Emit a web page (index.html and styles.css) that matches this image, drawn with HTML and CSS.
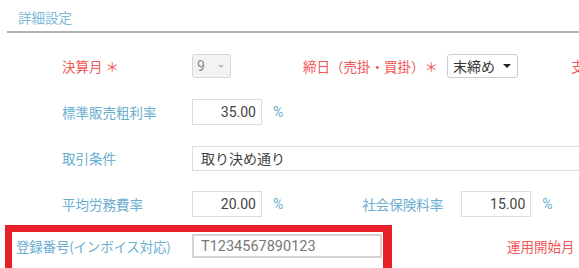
FILE: index.html
```html
<!doctype html>
<html>
<head>
    <meta charset="utf-8">
    <title>詳細設定</title>
    <link rel="stylesheet" href="styles.css">
</head>
<body>

<div class="section-head">詳細設定</div>

<div class="form">
    <div class="row">
        <div class="label required">決算月 ＊</div>
        <div class="select disabled select-month"><span>9</span><i class="caret"></i></div>
        <div class="label required label-close">締日（売掛・買掛）＊</div>
        <div class="select select-close"><span>末締め</span><i class="caret"></i></div>
        <div class="label required label-pay">支払日</div>
    </div>

    <div class="row">
        <div class="label">標準販売粗利率</div>
        <input class="input num" type="text" value="35.00">
        <span class="unit">%</span>
    </div>

    <div class="row">
        <div class="label">取引条件</div>
        <input class="input wide" type="text" value="取り決め通り">
    </div>

    <div class="row">
        <div class="label">平均労務費率</div>
        <input class="input num" type="text" value="20.00">
        <span class="unit">%</span>
        <div class="label label-social">社会保険料率</div>
        <input class="input num" type="text" value="15.00">
        <span class="unit">%</span>
    </div>

    <div class="row row-invoice">
        <div class="highlight">
            <div class="label label-invoice">登録番号(インボイス対応)</div>
            <input class="input invoice" type="text" value="T1234567890123">
        </div>
        <div class="label required label-start">運用開始月</div>
    </div>
</div>

</body>
</html>
```

FILE: styles.css
```css
body {
    margin: 0;
    font-family: Roboto, "Noto Sans CJK JP", sans-serif;
    font-size: 14px;
    color: #333;
    background: #fff;
    overflow: hidden;
}

.section-head {
    margin-left: 7px;
    height: 31px;
    line-height: 36px;
    padding-left: 11px;
    font-size: 13.5px;
    color: #7bb9d6;
    border-bottom: 2px solid #b3b3b3;
    box-sizing: content-box;
}

.form {
    padding-top: 10px;
}

.row {
    display: flex;
    align-items: center;
    height: 46px;
    white-space: nowrap;
}

.label {
    width: 130px;
    padding-left: 62px;
    color: #6aaed0;
    font-family: "Noto Sans CJK JP", sans-serif;
    font-size: 13.5px;
    flex-shrink: 0;
}

.required {
    color: #f25757;
}

.label-close {
    width: auto;
    padding-left: 72px;
    margin-right: 9px;
}

.label-pay {
    width: auto;
    padding-left: 53px;
}

.label-social {
    width: 99px;
    padding-left: 79px;
}

.label-start {
    width: auto;
    padding-left: 115px;
}

.select {
    display: flex;
    align-items: center;
    justify-content: space-between;
    box-sizing: border-box;
    height: 24px;
    padding: 0 6px 0 8px;
    border: 1px solid #ccc;
    border-radius: 3px;
    background: #fff;
    flex-shrink: 0;
}

.select span {
    font-family: Roboto, "Noto Sans CJK JP", sans-serif;
    font-size: 14px;
}

.caret {
    width: 0;
    height: 0;
    border-left: 4px solid transparent;
    border-right: 4px solid transparent;
    border-top: 4px solid #222;
}

.select-month {
    width: 39px;
    padding-left: 4px;
}

.select-close {
    width: 71px;
    padding-left: 5px;
}

.select-close span {
    font-family: "Noto Sans CJK JP", sans-serif;
    color: #333;
}

.disabled {
    background: #f3f3f3;
    border-color: #d5d5d5;
}

.disabled span {
    color: #888;
}

.disabled .caret {
    border-top-color: #bbb;
    border-left-width: 3px;
    border-right-width: 3px;
    border-top-width: 3px;
}

.input {
    box-sizing: border-box;
    height: 26px;
    margin: 0;
    padding: 0 6px 0 8px;
    border: 1px solid #ddd;
    border-radius: 0;
    font-family: Roboto, "Noto Sans CJK JP", sans-serif;
    font-size: 14px;
    color: #444;
    background: #fff;
    outline: none;
    flex-shrink: 0;
}

.num {
    width: 70px;
    text-align: right;
    padding-right: 5px;
}

.wide {
    width: 400px;
    height: 25px;
    font-family: "Noto Sans CJK JP", sans-serif;
    color: #444;
}

.unit {
    margin-left: 11px;
    color: #6aaed0;
    font-size: 14px;
}

.row-invoice {
    margin-top: -2px;
    height: auto;
    align-items: flex-start;
}

.highlight {
    display: flex;
    align-items: center;
    margin-left: 5px;
    width: 387px;
    box-sizing: border-box;
    padding: 2px 0 10px;
    border: 7px solid #e8202a;
    border-right-width: 9px;
    border-bottom: 0;
    flex-shrink: 0;
}

.label-invoice {
    width: 176px;
    padding-left: 4px;
    font-size: 13.5px;
    letter-spacing: -0.2px;
}

.invoice {
    width: 190px;
    height: 24px;
    border: 2px solid #d4d4d4;
    color: #777;
    padding-left: 7px;
    font-size: 14.5px;
}

.row-invoice .label-start {
    padding-top: 11px;
}
```
